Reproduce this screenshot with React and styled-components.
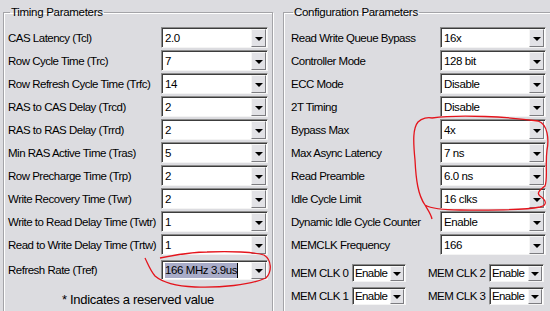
import { Fragment } from 'react'
import styled, { createGlobalStyle } from 'styled-components'

const GlobalStyle = createGlobalStyle`
    html, body {
        margin: 0;
        background: #dcdce0;
        overflow: hidden;
    }
    body {
        font-family: "Liberation Sans", Arial, sans-serif;
        font-size: 11px;
        color: #000;
    }
`

const Page = styled.div`
    position: relative;
    width: 550px;
    height: 311px;
    display: flex;
    gap: 10px;
    padding: 5px 0 0 3px;
    box-sizing: border-box;
`

const GroupBox = styled.fieldset`
    margin: 0;
    box-sizing: border-box;
    width: ${p => p.width}px;
    flex-shrink: 0;
    height: 330px;
    padding: 8px ${p => p.padRight}px 0 ${p => p.padLeft}px;
    border: 1px solid #a4a4a8;
    box-shadow: inset 1px 1px 0 #fff, 1px 1px 0 #fff;
`

const Legend = styled.legend`
    padding: 0 1px;
    margin-left: 2px;
    line-height: 14px;
    font-size: 11.5px;
    letter-spacing: -0.3px;
`

const Rows = styled.div`
    display: grid;
    width: ${p => p.width ? `${p.width}px` : 'auto'};
    grid-template-columns: 1fr ${p => p.selectWidth}px;
    grid-auto-rows: 21px;
    row-gap: 2px;
    align-items: center;
`

const Label = styled.span`
    white-space: nowrap;
    font-size: 11.5px;
    letter-spacing: -0.5px;
    margin-top: ${p => p.offset || 0}px;
`

const SelectBox = styled.div`
    display: flex;
    box-sizing: border-box;
    height: ${p => p.height}px;
    margin-top: ${p => p.offset || 0}px;
    background: #fff;
    border-top: 1px solid #8c8c8c;
    border-left: 1px solid #8c8c8c;
    border-right: 1px solid #f4f4f4;
    border-bottom: 1px solid #f4f4f4;
    box-shadow: inset 1px 1px 0 #3c3c3c;
    padding: 1px 1px 0 1px;
`

const SelectText = styled.span`
    flex: 1;
    padding-left: ${p => p.small ? 1 : 2}px;
    font-size: 11.5px;
    line-height: ${p => p.height - 3}px;
    white-space: nowrap;
    overflow: hidden;
    letter-spacing: ${p => p.small ? -0.6 : -0.4}px;
`

const Highlight = styled.span`
    background: #a9acc8;
    padding: 1px 0 2px;
    border-right: 1px solid #000;
`

const ArrowButton = styled.div`
    width: ${p => p.small ? 14 : 15}px;
    flex-shrink: 0;
    box-sizing: border-box;
    background: #e2e2e6;
    border-top: 1px solid #f6f6f6;
    border-left: 1px solid #f6f6f6;
    border-right: 1px solid #7c7c80;
    border-bottom: 1px solid #7c7c80;
    display: flex;
    align-items: center;
    justify-content: center;

    &::after {
        content: '';
        border-left: 4px solid transparent;
        border-right: 4px solid transparent;
        border-top: 4px solid #000;
        margin-top: 1px;
    }
`

const Footer = styled.div`
    text-align: center;
    font-size: 13px;
    margin-top: 14px;
    letter-spacing: -0.3px;
`

const ClockGrid = styled.div`
    display: grid;
    grid-template-columns: 61px 54px 22px 61px 55px;
    grid-auto-rows: 18px;
    row-gap: 5px;
    align-items: center;
    margin-top: 9px;
`

const Annotations = styled.svg`
    position: absolute;
    left: 0;
    top: 0;
    pointer-events: none;
`

const Select = ({ value, height = 21, selected, offset, small }) => (
    <SelectBox height={height} offset={offset}>
        <SelectText height={height} small={small}>
            {selected ? <Highlight>{value}</Highlight> : value}
        </SelectText>
        <ArrowButton small={small} />
    </SelectBox>
)

const timing = [
    ['CAS Latency (Tcl)', '2.0'],
    ['Row Cycle Time (Trc)', '7'],
    ['Row Refresh Cycle Time (Trfc)', '14'],
    ['RAS to CAS Delay (Trcd)', '2'],
    ['RAS to RAS Delay (Trrd)', '2'],
    ['Min RAS Active Time (Tras)', '5'],
    ['Row Precharge Time (Trp)', '2'],
    ['Write Recovery Time (Twr)', '2'],
    ['Write to Read Delay Time (Twtr)', '1'],
    ['Read to Write Delay Time (Trtw)', '1'],
]

const config = [
    ['Read Write Queue Bypass', '16x'],
    ['Controller Mode', '128 bit'],
    ['ECC Mode', 'Disable'],
    ['2T Timing', 'Disable'],
    ['Bypass Max', '4x'],
    ['Max Async Latency', '7 ns'],
    ['Read Preamble', '6.0 ns'],
    ['Idle Cycle Limit', '16 clks'],
    ['Dynamic Idle Cycle Counter', 'Enable'],
    ['MEMCLK Frequency', '166'],
]

const clocks = [
    ['MEM CLK 0', 'MEM CLK 2'],
    ['MEM CLK 1', 'MEM CLK 3'],
]

const App = () => {
    return (
        <>
            <GlobalStyle />
            <Page>
                <GroupBox width={270} padLeft={4} padRight={4}>
                    <Legend>Timing Parameters</Legend>
                    <Rows selectWidth={107}>
                        {timing.map(([label, value]) => (
                            <Fragment key={label}>
                                <Label>{label}</Label>
                                <Select value={value} />
                            </Fragment>
                        ))}
                        <Label offset={4}>Refresh Rate (Tref)</Label>
                        <Select value="166 MHz 3.9us" selected offset={4} height={20} />
                    </Rows>
                    <Footer>* Indicates a reserved value</Footer>
                </GroupBox>
                <GroupBox width={300} padLeft={7} padRight={0}>
                    <Legend>Configuration Parameters</Legend>
                    <Rows selectWidth={106} width={255}>
                        {config.map(([label, value]) => (
                            <Fragment key={label}>
                                <Label>{label}</Label>
                                <Select value={value} />
                            </Fragment>
                        ))}
                    </Rows>
                    <ClockGrid>
                        {clocks.map(([a, b]) => (
                            <Fragment key={a}>
                                <Label>{a}</Label>
                                <Select value="Enable" height={18} small />
                                <span />
                                <Label>{b}</Label>
                                <Select value="Enable" height={18} small />
                            </Fragment>
                        ))}
                    </ClockGrid>
                </GroupBox>
                <Annotations width="550" height="311" viewBox="0 0 550 311">
                    <path
                        d="M432,118 C460,114 510,117 538,121 C548,124 549,140 547,150 C545,165 548,178 545,186 C540,190 536,193 540,196 C546,200 548,205 540,207 C520,211 480,210 460,210 C445,210 432,209 425,205 C418,195 416,180 415,160 C413,140 413,128 418,122 C422,118 428,117 432,118 M425,205 C428,210 431,214 432,219"
                        fill="none"
                        stroke="#e4141c"
                        strokeWidth="1.3"
                    />
                    <path
                        d="M160,258 C175,255 190,252 207,252 C230,251 255,252 264,255 C272,260 272,272 266,278 C250,285 220,288 195,287 C175,286 162,282 155,276 C150,270 148,264 145,258"
                        fill="none"
                        stroke="#e4141c"
                        strokeWidth="1.3"
                    />
                </Annotations>
            </Page>
        </>
    )
}

export default App
